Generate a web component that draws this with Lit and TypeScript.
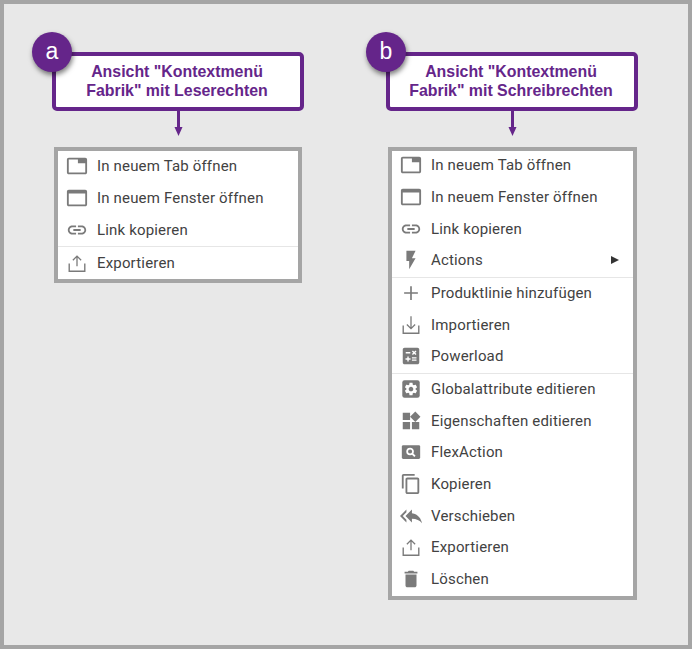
import { LitElement, html, css, svg } from "lit";
import { customElement } from "lit/decorators.js";

const p = (d: string) => svg`<path d=${d}></path>`;
const tray = (up: boolean) => svg`
  <g fill="none" stroke="currentColor" stroke-width="1.5">
    <path d="M3.500 12.500V21h17v-8.500"></path>
    ${up ? svg`<path d="M12 15.500V4.500M7.500 9l4.500-4.500L16.500 9" stroke-width="1.4"></path>` : svg`<path d="M12 2.500V16M7.500 11.500L12 16l4.500-4.500" stroke-width="1.4"></path>`}
  </g>`;

const icons: Record<string, unknown> = {
  tab: p("M21 3H3c-1.1 0-2 .9-2 2v14c0 1.1.9 2 2 2h18c1.1 0 2-.9 2-2V5c0-1.1-.9-2-2-2zm0 16H3V5h10v4h8v10z"),
  win: p("M21 3H3c-1.1 0-2 .9-2 2v14c0 1.1.9 2 2 2h18c1.1 0 2-.9 2-2V5c0-1.1-.9-2-2-2zm0 16H3V7h18v12z"),
  link: p("M3.9 12c0-1.71 1.39-3.1 3.1-3.1h4V7H7c-2.76 0-5 2.24-5 5s2.24 5 5 5h4v-1.9H7c-1.71 0-3.1-1.39-3.1-3.1zM8 13h8v-2H8v2zm9-6h-4v1.9h4c1.71 0 3.1 1.39 3.1 3.1s-1.39 3.1-3.1 3.1h-4V17h4c2.76 0 5-2.24 5-5s-2.24-5-5-5z"),
  exp: tray(true),
  imp: tray(false),
  flash: p("M7 2v11h3v9l7-12h-4l4-8z"),
  plus: svg`<path d="M12 4.500v15M4.500 12h15" fill="none" stroke="currentColor" stroke-width="1.8"></path>`,
  calc: p("M19 3H5c-1.1 0-2 .9-2 2v14c0 1.1.9 2 2 2h14c1.1 0 2-.9 2-2V5c0-1.1-.9-2-2-2zm-5.970 4.060L14.090 6l1.410 1.410L16.910 6l1.060 1.060-1.410 1.410 1.410 1.410-1.060 1.060-1.410-1.400-1.410 1.410-1.060-1.060 1.410-1.410-1.410-1.420zM6.250 7.720h5v1.500h-5v-1.500zM11.500 16h-2v2H8v-2H6v-1.500h2v-2h1.500v2h2V16zm6.500 1.250h-5v-1.500h5v1.500zm0-2.500h-5v-1.500h5v1.500z"),
  gear: svg`<rect x="2.500" y="2.500" width="19" height="19" rx="2.500"></rect>
    <path fill="#fff" fill-rule="evenodd" transform="translate(3.600 3.600) scale(.7)" d="M19.140 12.940c.04-.3.06-.61.06-.94 0-.32-.02-.64-.07-.94l2.030-1.580c.18-.14.23-.41.12-.61l-1.920-3.320c-.12-.22-.37-.29-.59-.22l-2.390.96c-.5-.38-1.030-.7-1.620-.94l-.36-2.540c-.04-.24-.24-.41-.48-.41h-3.840c-.24 0-.43.17-.47.41l-.36 2.540c-.59.24-1.130.57-1.620.94l-2.390-.96c-.22-.08-.47 0-.59.22L2.740 8.870c-.12.21-.08.47.12.61l2.030 1.580c-.05.3-.09.63-.09.94s.02.64.07.94l-2.030 1.580c-.18.14-.23.41-.12.61l1.920 3.320c.12.22.37.29.59.22l2.390-.96c.5.38 1.030.7 1.620.94l.36 2.540c.05.24.24.41.48.41h3.840c.24 0 .44-.17.47-.41l.36-2.540c.59-.24 1.130-.56 1.620-.94l2.390.96c.22.08.47 0 .59-.22l1.920-3.320c.12-.22.07-.47-.12-.61l-2.010-1.580zM12 15.600c-1.980 0-3.600-1.620-3.600-3.600s1.620-3.600 3.600-3.600 3.600 1.620 3.600 3.600-1.620 3.600-3.600 3.600z"></path>`,
  widgets: p("M13 13v8h8v-8h-8zM3 21h8v-8H3v8zM3 3v8h8V3H3zm13.660-1.310L11 7.340 16.660 13l5.660-5.660-5.660-5.650z"),
  flex: svg`<rect x="2" y="4.500" width="20" height="15" rx="1.500"></rect>
    <circle cx="11" cy="11.500" r="3.200" fill="none" stroke="#fff" stroke-width="1.900"></circle>
    <path d="M13.300 13.800l3 3" stroke="#fff" stroke-width="2.200"></path>`,
  copy: p("M16 1H4c-1.100 0-2 .9-2 2v14h2V3h12V1zm3 4H8c-1.100 0-2 .9-2 2v14c0 1.100.9 2 2 2h11c1.100 0 2-.9 2-2V7c0-1.100-.9-2-2-2zm0 16H8V7h11v14z"),
  reply: p("M7 8V5l-7 7 7 7v-3l-4-4 4-4zm6 1V5l-7 7 7 7v-4.100c5 0 8.500 1.600 11 5.100-1-5-4-10-11-11z"),
  del: p("M6 19c0 1.100.9 2 2 2h8c1.100 0 2-.9 2-2V7H6v12zM19 4h-3.500l-1-1h-5l-1 1H5v2h14V4z"),
};

type Item = { i: string; t: string; sub?: boolean };
type Column = { key: string; l1: string; l2: string; cls: string; groups: Item[][] };

const base: Item[] = [
  { i: "tab", t: "In neuem Tab öffnen" },
  { i: "win", t: "In neuem Fenster öffnen" },
  { i: "link", t: "Link kopieren" },
];

const columns: Column[] = [
  {
    key: "a", l1: 'Ansicht "Kontextmenü', l2: 'Fabrik" mit Leserechten', cls: "ma",
    groups: [base, [{ i: "exp", t: "Exportieren" }]],
  },
  {
    key: "b", l1: 'Ansicht "Kontextmenü', l2: 'Fabrik" mit Schreibrechten', cls: "mb",
    groups: [
      [...base, { i: "flash", t: "Actions", sub: true }],
      [
        { i: "plus", t: "Produktlinie hinzufügen" },
        { i: "imp", t: "Importieren" },
        { i: "calc", t: "Powerload" },
      ],
      [
        { i: "gear", t: "Globalattribute editieren" },
        { i: "widgets", t: "Eigenschaften editieren" },
        { i: "flex", t: "FlexAction" },
        { i: "copy", t: "Kopieren" },
        { i: "reply", t: "Verschieben" },
        { i: "exp", t: "Exportieren" },
        { i: "del", t: "Löschen" },
      ],
    ],
  },
];

@customElement("app-root")
export class AppRoot extends LitElement {
  static styles = css`
    :host {
      display: block;
      width: 692px;
      height: 649px;
      box-sizing: border-box;
      border: 4px solid #a5a5a5;
      background: #e8e8e8;
      padding: 48px 0 0 48px;
      font-family: Roboto, "Liberation Sans", sans-serif;
    }
    .cols { display: flex; gap: 82px; align-items: flex-start; }
    .col { width: 252px; display: flex; flex-direction: column; }
    .callout {
      position: relative;
      box-sizing: border-box;
      height: 59px;
      border: 4px solid #65258a;
      border-radius: 5px;
      background: #fff;
      color: #65258a;
      font: bold 15.9px/19px "Liberation Sans", Arial, sans-serif;
      text-align: center;
      display: flex;
      flex-direction: column;
      justify-content: center;
      padding: 0 2px 2px 0;
    }
    .badge {
      position: absolute;
      left: -24px;
      top: -24px;
      width: 40px;
      height: 40px;
      border-radius: 50%;
      background: #65258a;
      color: #fff;
      font: 23px/38px "Liberation Sans", Arial, sans-serif;
      text-align: center;
      box-shadow: 1px 3px 5px rgba(0, 0, 0, 0.5);
    }
    .arrow { display: block; height: 36px; width: 252px; }
    .menu {
      box-sizing: border-box;
      margin-left: 2px;
      border: 4px solid #a5a5a5;
      background: #fff;
      color: #424242;
    }
    .ma { width: 248px; height: 136px; }
    .mb { width: 249px; height: 453px; }
    .group {
      display: flex;
      flex-direction: column;
      gap: 3.67px;
      padding: 1px 0 2.7px;
      border-bottom: 1px solid #e6e6e6;
    }
    .ma .group:first-child { padding-top: 1.3px; }
    .ma .group:last-child { padding-top: 1.7px; }
    .mb .group:first-child { padding-top: 0.3px; }
    .group:last-child { border-bottom: none; }
    .row {
      height: 28px;
      display: flex;
      align-items: center;
      padding: 0 14px 0 7px;
      gap: 8px;
      font-size: 15px;
      letter-spacing: 0.17px;
    }
    .ico { width: 24px; height: 24px; display: flex; align-items: center; justify-content: center; color: #7a7a7a; }
    .ico svg { width: 22px; height: 22px; fill: currentColor; display: block; }
    .label { flex: 1; white-space: nowrap; }
    .caret {
      width: 0;
      height: 0;
      border-left: 8px solid #333;
      border-top: 4.5px solid transparent;
      border-bottom: 4.5px solid transparent;
    }
  `;

  private renderRow(it: Item) {
    return html`<div class="row">
      <span class="ico"><svg viewBox="0 0 24 24">${icons[it.i]}</svg></span>
      <span class="label">${it.t}</span>
      ${it.sub ? html`<span class="caret"></span>` : ""}
    </div>`;
  }

  render() {
    return html`<div class="cols">
      ${columns.map(
        (c) => html`<section class="col">
          <div class="callout">
            <span class="badge">${c.key}</span>
            <div>${c.l1}</div>
            <div>${c.l2}</div>
          </div>
          <svg class="arrow" viewBox="0 0 252 36">
            <path d="M126.500 0v17" stroke="#65258a" stroke-width="3" fill="none"></path>
            <path d="M122.500 16h8l-4 9z" fill="#65258a"></path>
          </svg>
          <div class="menu ${c.cls}">
            ${c.groups.map((g) => html`<div class="group">${g.map((it) => this.renderRow(it))}</div>`)}
          </div>
        </section>`
      )}
    </div>`;
  }
}
